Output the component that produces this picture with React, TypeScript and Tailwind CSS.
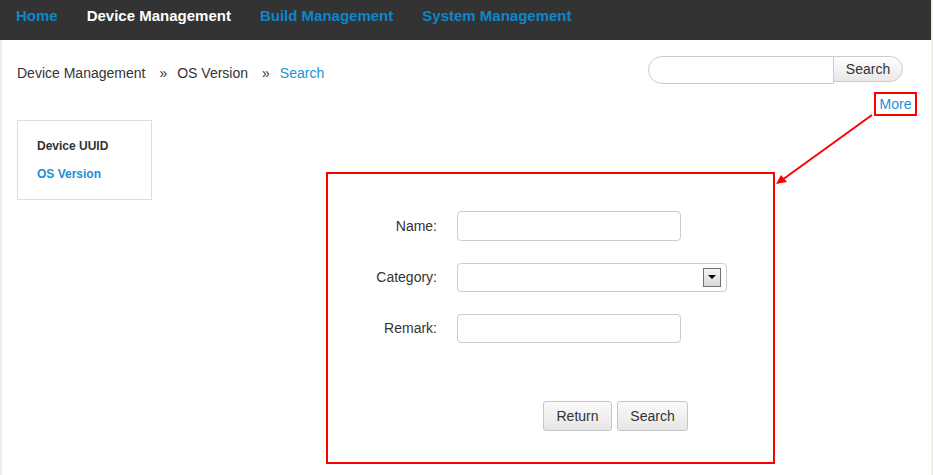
import React from "react";

const navItems = [
  { label: "Home", active: false },
  { label: "Device Management", active: true },
  { label: "Build Management", active: false },
  { label: "System Management", active: false },
];

const FormRow: React.FC<{ label: string; children: React.ReactNode }> = ({
  label,
  children,
}) => (
  <div className="flex items-center h-[30px]">
    <label className="w-[129px] text-right pr-[20px] text-[14px] text-[#333]">
      {label}
    </label>
    {children}
  </div>
);

const App: React.FC = () => {
  return (
    <div
      className="relative min-h-screen w-[933px] bg-[#efede9] text-[#333]"
      style={{ fontFamily: '"Liberation Sans", Arial, sans-serif' }}
    >
      <nav className="flex items-start h-[40px] w-[931px] bg-[#333333] pl-[16px] pt-[7px] gap-[29px]">
        {navItems.map((item) => (
          <a
            key={item.label}
            href="#"
            className={`text-[15px] leading-[18px] font-bold ${
              item.active ? "text-white" : "text-[#0d86cc]"
            }`}
          >
            {item.label}
          </a>
        ))}
      </nav>

      <div className="ml-[2px] w-[929px] h-[435px] bg-white px-[15px]">
        <div className="flex items-start justify-between pt-[16px] h-[44px]">
          <div className="flex items-center text-[14px] pt-[7px]">
            <span>Device Management</span>
            <span className="ml-[14px]">»</span>
            <span className="ml-[10px]">OS Version</span>
            <span className="ml-[14px]">»</span>
            <span className="ml-[10px] text-[#1a93d9]">Search</span>
          </div>
          <div className="flex items-start mr-[13px]">
            <input
              type="text"
              className="h-[28px] w-[186px] rounded-l-full border border-[#ccc] bg-white outline-none"
            />
            <button className="h-[26px] w-[70px] -ml-px rounded-r-full border border-[#ccc] bg-gradient-to-b from-white to-[#e8e8e8] text-[14px] text-[#333]">
              Search
            </button>
          </div>
        </div>

        <div className="flex justify-end mt-[8px] mr-[-1px]">
          <a
            href="#"
            className="flex items-center justify-center h-[24px] w-[43px] border-2 border-[#ff0000] text-[14px] text-[#1a90d8]"
          >
            More
          </a>
        </div>

        <div className="flex mt-[4px]">
          <div className="w-[135px] h-[80px] border border-[#ddd] pl-[19px] pt-[16px] flex flex-col gap-[10px] text-[12px] font-bold">
            <a href="#" className="text-[#333]">
              Device UUID
            </a>
            <a href="#" className="text-[#1a8fd6]">
              OS Version
            </a>
          </div>

          <div className="ml-[174px] mt-[52px] w-[449px] h-[292px] border-2 border-[#ff0000]">
            <div className="pt-[37px] flex flex-col gap-[21px]">
              <FormRow label="Name:">
                <input
                  type="text"
                  className="h-[30px] w-[224px] rounded-[4px] border border-[#ccc] outline-none"
                />
              </FormRow>
              <FormRow label="Category:">
                <div className="relative h-[29px] w-[270px] rounded-[4px] border border-[#ccc] bg-white">
                  <div className="absolute right-[5px] top-[4px] h-[19px] w-[18px] border border-[#707070] bg-gradient-to-b from-[#f4f4f4] to-[#d8d8d8] flex items-center justify-center">
                    <div className="h-0 w-0 border-l-[4px] border-r-[4px] border-t-[4px] border-l-transparent border-r-transparent border-t-black" />
                  </div>
                </div>
              </FormRow>
              <FormRow label="Remark:">
                <input
                  type="text"
                  className="h-[29px] w-[224px] rounded-[4px] border border-[#ccc] outline-none"
                />
              </FormRow>
            </div>
            <div className="flex gap-[5px] ml-[215px] mt-[58px]">
              <button className="h-[30px] w-[69px] rounded-[3px] border border-[#c6c6c6] bg-gradient-to-b from-[#fafafa] to-[#e6e6e6] text-[14px] text-[#333]">
                Return
              </button>
              <button className="h-[30px] w-[71px] rounded-[3px] border border-[#c6c6c6] bg-gradient-to-b from-[#fafafa] to-[#e6e6e6] text-[14px] text-[#333]">
                Search
              </button>
            </div>
          </div>
        </div>
      </div>

      <svg
        className="absolute left-0 top-0 pointer-events-none"
        width="933"
        height="475"
      >
        <line x1="872" y1="115" x2="782" y2="180" stroke="#ff0000" strokeWidth="2" />
        <polygon points="776,184 781,175 787,182" fill="#ff0000" />
      </svg>
    </div>
  );
};

export default App;
